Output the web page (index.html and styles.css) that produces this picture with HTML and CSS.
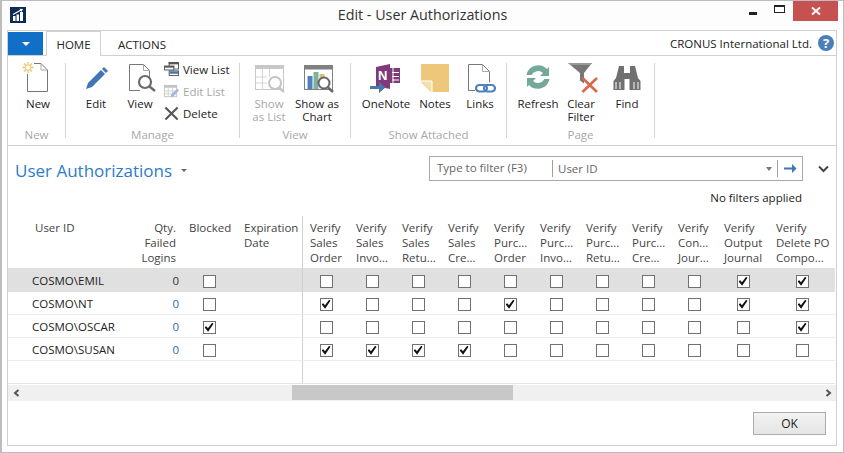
FILE: index.html
```html
<!DOCTYPE html>
<html lang="en">
<head>
<meta charset="utf-8">
<title>Edit - User Authorizations</title>
<link rel="stylesheet" href="styles.css">
</head>
<body>
<div class="window">
  <header class="titlebar">
    <svg class="logo" width="16" height="16" viewBox="0 0 16 16"><rect width="16" height="16" fill="#0e2a58"/><path d="M3 9h2.500v5H3zM6.500 7.500H9V14H6.500zM10 5h3v9h-3z" fill="#fff"/><path d="M3 7.500 11 3" stroke="#fff" stroke-width="1.200" fill="none"/><path d="M9.500 1.800 13 2l-1.500 3z" fill="#fff"/></svg>
    <div class="title">Edit - User Authorizations</div>
    <div class="winctl">
      <span class="wbtn"><span class="min"></span></span>
      <span class="wbtn"><span class="max"></span></span>
      <span class="close"><svg width="10" height="10" viewBox="0 0 10 10"><path d="M1 1.500 9 8.500M9 1.500 1 8.500" stroke="#fff" stroke-width="2"/></svg></span>
    </div>
  </header>
  <div class="frame">
    <div class="tabs">
      <button class="menu"><span class="menu-caret"></span></button>
      <span class="tab active">HOME</span>
      <span class="tab">ACTIONS</span>
      <span class="company">CRONUS International Ltd.</span>
      <span class="help">?</span>
    </div>
    <div class="ribbon">
      <section class="group g-new">
        <div class="items">
          <div class="btn w44">
            <svg viewBox="0 0 32 32"><path d="M12 1.500h7l6.500 6.500v21.500h-20V12" fill="#fff" stroke="#777"/><path d="M19 1.500V8h6.500" fill="none" stroke="#aaa"/><g stroke="#f2c46c" stroke-width="1.300"><path d="M.5 5.500h11M6 0v11M2 1.500l8 8M10 1.500l-8 8"/></g><circle cx="6" cy="5.500" r="2.700" fill="#fff" stroke="#f2c46c"/></svg>
            <span>New</span>
          </div>
        </div>
        <div class="glabel">New</div>
      </section>
      <i class="sep"></i>
      <section class="group g-manage">
        <div class="items">
          <div class="btn w44">
            <svg viewBox="0 0 32 32"><path d="M6 27 8 21 21 8 25 12 12 25z" fill="#3f76b5"/><path d="M22 7 24 5 28 9 26 11z" fill="#3f76b5"/></svg>
            <span>Edit</span>
          </div>
          <div class="btn w44">
            <svg viewBox="0 0 32 32"><path d="M5.500 2.500h14l6 6v8M16 28.500H5.500v-26" fill="#fff" stroke="#777"/><path d="M19.500 2.500v6h6" fill="none" stroke="#aaa"/><circle cx="21" cy="20" r="6" fill="#fff" stroke="#6b6b6b" stroke-width="2.200"/><path d="M25.500 24.500 31 29" stroke="#6b6b6b" stroke-width="2.400"/></svg>
            <span>View</span>
          </div>
          <div class="small-col">
            <div class="sbtn">
              <svg viewBox="0 0 16 16"><rect x="5.500" y=".5" width="10" height="7" fill="#fff" stroke="#555"/><rect x="5" y="0" width="11" height="2.500" fill="#555"/><rect x=".5" y="4.500" width="10" height="4" fill="#fff" stroke="#555"/><rect x="0" y="4" width="11" height="2" fill="#555"/><rect x="5.500" y="9.500" width="10" height="5" fill="#fff" stroke="#555"/><rect x="6" y="10" width="9" height="2.500" fill="#3f76b5"/></svg>
              <span>View List</span>
            </div>
            <div class="sbtn off">
              <svg viewBox="0 0 16 16"><rect x=".5" y="1.500" width="13" height="12" fill="#fff" stroke="#c4c4c4"/><rect x="0" y="1" width="14" height="3" fill="#c4c4c4"/><path d="M0 7.500h14M0 10.500h14M4.500 4v10M9 4v10" stroke="#d0d0d0"/><path d="M7 14l1-3 6-6 2 2-6 6z" fill="#9db9d9"/></svg>
              <span>Edit List</span>
            </div>
            <div class="sbtn">
              <svg viewBox="0 0 16 16"><path d="M1.500 1.500 14.500 14.500M14.500 1.500 1.500 14.500" stroke="#555" stroke-width="2.200"/></svg>
              <span>Delete</span>
            </div>
          </div>
        </div>
        <div class="glabel">Manage</div>
      </section>
      <i class="sep"></i>
      <section class="group g-view">
        <div class="items">
          <div class="btn w48 off">
            <svg viewBox="0 0 32 32"><rect x="2.500" y="3.500" width="28" height="24" fill="#fff" stroke="#c8c8c8"/><rect x="2" y="3" width="29" height="4" fill="#c8c8c8"/><path d="M9.500 7v21M16.500 7v8M2 15h12M2 21h12" stroke="#d4d4d4"/><circle cx="22" cy="21" r="6" fill="#fff" stroke="#c4c4c4" stroke-width="2"/><path d="M26 25.500 31 30" stroke="#c4c4c4" stroke-width="2.400"/></svg>
            <span>Show<br>as List</span>
          </div>
          <div class="btn w48">
            <svg viewBox="0 0 32 32"><rect x="3.500" y="3.500" width="28" height="24" fill="#fff" stroke="#808080"/><rect x="3" y="3" width="29" height="4.500" fill="#808080"/><rect x="6.500" y="14" width="5" height="13" fill="#4f81bd"/><rect x="12.500" y="10" width="5" height="17" fill="#7fb0a0"/><rect x="18.500" y="12" width="5" height="6" fill="#d6c27c"/><circle cx="23" cy="21" r="5.500" fill="#fff" stroke="#666" stroke-width="2"/><path d="M27 25.500 32 30" stroke="#666" stroke-width="2.400"/></svg>
            <span>Show as<br>Chart</span>
          </div>
        </div>
        <div class="glabel">View</div>
      </section>
      <i class="sep"></i>
      <section class="group g-attach">
        <div class="items">
          <div class="btn w54">
            <svg viewBox="0 0 32 32"><path d="M6 5 20 2V27L6 24z" fill="#80397b"/><rect x="20" y="6" width="10" height="15" fill="#80397b"/><path d="M23 6v15M22 10.500h7M22 14.500h7M22 18h7" stroke="#fff"/><text x="8" y="18" class="on-n">N</text><path d="M0 24h9V20l6.500 5.500L9 31V27H0z" fill="#4677ad"/></svg>
            <span>OneNote</span>
          </div>
          <div class="btn w44">
            <svg viewBox="0 0 32 32"><path d="M2 2h28v28H12L2 20z" fill="#efc77a"/><path d="M2 19h11v11" fill="#f6dfae" stroke="#fff"/></svg>
            <span>Notes</span>
          </div>
          <div class="btn w46">
            <svg viewBox="0 0 32 32"><path d="M4.500 2.500h14l7 7v11M11 28.500H4.500v-26" fill="#fff" stroke="#777"/><path d="M18.500 2.500v7h7" fill="none" stroke="#aaa"/><rect x="12" y="23" width="11" height="6.500" rx="3.200" fill="none" stroke="#4f81bd" stroke-width="2.200"/><rect x="20" y="23" width="11" height="6.500" rx="3.200" fill="none" stroke="#4f81bd" stroke-width="2.200"/></svg>
            <span>Links</span>
          </div>
        </div>
        <div class="glabel">Show Attached</div>
      </section>
      <i class="sep"></i>
      <section class="group g-page">
        <div class="items">
          <div class="btn w46">
            <svg viewBox="0 0 32 32"><path d="M4.500 13A12 12 0 0 1 25 7l2-2v9h-9l3-3A7.500 7.500 0 0 0 9.500 13z" fill="#74a99a"/><path d="M27.500 17A12 12 0 0 1 7 23l-2 2v-9h9l-3 3a7.500 7.500 0 0 0 11.500-2z" fill="#74a99a"/></svg>
            <span>Refresh</span>
          </div>
          <div class="btn w40">
            <svg viewBox="0 0 32 32"><path d="M3 1h24L19 11v10.500l-4 -3V11z" fill="#777"/><path d="M3 1h24l-2 2H6z" fill="#999"/><path d="M17.500 16 32 30M32 16 17.500 30" stroke="#d9694a" stroke-width="2.600"/></svg>
            <span>Clear<br>Filter</span>
          </div>
          <div class="btn w52">
            <svg viewBox="0 0 32 32"><path d="M8 4h5v7h6V4h5l3 12 2.500 3v9h-11V17h-5v11H2.500v-9L5 16z" fill="#707070"/><path d="M5 20v7M9 20v7M23 20v7M27 20v7" stroke="#fff"/></svg>
            <span>Find</span>
          </div>
        </div>
        <div class="glabel">Page</div>
      </section>
      <i class="sep"></i>
    </div>
    <div class="content">
      <div class="head">
        <h1>User Authorizations</h1>
        <span class="title-caret"></span>
        <div class="filter-area">
          <div class="filter-row">
            <div class="filter">
              <span class="f-type">Type to filter (F3)</span>
              <span class="f-field">User ID</span>
              <span class="f-caret"></span>
              <span class="f-go"><svg width="13" height="11" viewBox="0 0 13 11"><path d="M0 4.500h8V1l4.500 4.500L8 10V6.500H0z" fill="#3f76b5"/></svg></span>
            </div>
            <svg class="chev" width="11" height="8" viewBox="0 0 11 8"><path d="M1 1.500 5.500 6 10 1.500" fill="none" stroke="#444" stroke-width="2"/></svg>
          </div>
          <div class="nofilter">No filters applied</div>
        </div>
      </div>
      <table class="grid">
        <colgroup>
          <col class="c-user"><col class="c-qty"><col class="c-blk"><col class="c-exp">
          <col class="c-v"><col class="c-v"><col class="c-v"><col class="c-v"><col class="c-v"><col class="c-v"><col class="c-v"><col class="c-v"><col class="c-v">
          <col class="c-out"><col class="c-del">
        </colgroup>
        <thead>
          <tr>
            <th class="h-user">User ID</th>
            <th class="h-qty">Qty.<br>Failed<br>Logins</th>
            <th>Blocked</th>
            <th class="v-end h-exp">Expiration<br>Date</th>
            <th>Verify<br>Sales<br>Order</th>
            <th>Verify<br>Sales<br>Invo...</th>
            <th>Verify<br>Sales<br>Retu...</th>
            <th>Verify<br>Sales<br>Cre...</th>
            <th>Verify<br>Purc...<br>Order</th>
            <th>Verify<br>Purc...<br>Invo...</th>
            <th>Verify<br>Purc...<br>Retu...</th>
            <th>Verify<br>Purc...<br>Cre...</th>
            <th>Verify<br>Con...<br>Jour...</th>
            <th>Verify<br>Output<br>Journal</th>
            <th>Verify<br>Delete PO<br>Compo...</th>
          </tr>
        </thead>
        <tbody>
          <tr class="sel">
            <td class="user">COSMO\EMIL</td><td class="qty">0</td><td class="ck"><span class="cb"></span></td><td class="v-end"></td>
            <td class="ck"><span class="cb"></span></td><td class="ck"><span class="cb"></span></td><td class="ck"><span class="cb"></span></td><td class="ck"><span class="cb"></span></td><td class="ck"><span class="cb"></span></td><td class="ck"><span class="cb"></span></td><td class="ck"><span class="cb"></span></td><td class="ck"><span class="cb"></span></td><td class="ck"><span class="cb"></span></td>
            <td class="ck"><span class="cb on"></span></td><td class="ck"><span class="cb on"></span></td>
          </tr>
          <tr>
            <td class="user">COSMO\NT</td><td class="qty">0</td><td class="ck"><span class="cb"></span></td><td class="v-end"></td>
            <td class="ck"><span class="cb on"></span></td><td class="ck"><span class="cb"></span></td><td class="ck"><span class="cb"></span></td><td class="ck"><span class="cb"></span></td><td class="ck"><span class="cb on"></span></td><td class="ck"><span class="cb"></span></td><td class="ck"><span class="cb"></span></td><td class="ck"><span class="cb"></span></td><td class="ck"><span class="cb"></span></td>
            <td class="ck"><span class="cb on"></span></td><td class="ck"><span class="cb on"></span></td>
          </tr>
          <tr>
            <td class="user">COSMO\OSCAR</td><td class="qty">0</td><td class="ck"><span class="cb on"></span></td><td class="v-end"></td>
            <td class="ck"><span class="cb"></span></td><td class="ck"><span class="cb"></span></td><td class="ck"><span class="cb"></span></td><td class="ck"><span class="cb"></span></td><td class="ck"><span class="cb"></span></td><td class="ck"><span class="cb"></span></td><td class="ck"><span class="cb"></span></td><td class="ck"><span class="cb"></span></td><td class="ck"><span class="cb"></span></td>
            <td class="ck"><span class="cb"></span></td><td class="ck"><span class="cb on"></span></td>
          </tr>
          <tr>
            <td class="user">COSMO\SUSAN</td><td class="qty">0</td><td class="ck"><span class="cb"></span></td><td class="v-end"></td>
            <td class="ck"><span class="cb on"></span></td><td class="ck"><span class="cb on"></span></td><td class="ck"><span class="cb on"></span></td><td class="ck"><span class="cb on"></span></td><td class="ck"><span class="cb"></span></td><td class="ck"><span class="cb"></span></td><td class="ck"><span class="cb"></span></td><td class="ck"><span class="cb"></span></td><td class="ck"><span class="cb"></span></td>
            <td class="ck"><span class="cb"></span></td><td class="ck"><span class="cb"></span></td>
          </tr>
          <tr class="empty"><td></td><td></td><td></td><td class="v-end"></td><td colspan="11"></td></tr>
        </tbody>
      </table>
      <div class="scrollbar">
        <svg width="7" height="8" viewBox="0 0 7 8"><path d="M5.500 1 2 4l3.500 3" fill="none" stroke="#555" stroke-width="2"/></svg>
        <div class="track"><div class="thumb"></div></div>
        <svg width="7" height="8" viewBox="0 0 7 8"><path d="M1.500 1 5 4 1.500 7" fill="none" stroke="#555" stroke-width="2"/></svg>
      </div>
      <div class="footer"><button class="ok">OK</button></div>
    </div>
  </div>
</div>
</body>
</html>
```

FILE: styles.css
```css
* { box-sizing: border-box; }
html, body { margin: 0; padding: 0; }
body { width: 844px; height: 453px; overflow: hidden; background: #fff; font-family: "Open Sans", "Noto Sans", "Liberation Sans", sans-serif; font-size: 11.5px; color: #222; }
.window { width: 844px; height: 453px; border: 1px solid #bdbdbd; border-width: 1px 1px 1px 2px; display: flex; flex-direction: column; background: #fff; }

.titlebar { height: 29px; display: flex; align-items: flex-start; background: #fdfdfd; flex: none; }
.logo { margin: 6px 0 0 8px; flex: none; }
.title { flex: 1; text-align: center; font-size: 14.300px; line-height: 28px; color: #333; padding-left: 80px; }
.winctl { display: flex; align-items: flex-start; margin-right: 5px; }
.wbtn { width: 27px; height: 19px; display: flex; align-items: center; justify-content: center; }
.min { width: 8px; height: 3px; background: #222; margin-top: 6px; }
.max { width: 11px; height: 8px; border: 1px solid #222; border-top-width: 2px; margin-top: -3px; }
.close { width: 45px; height: 20px; background: #c75050; display: flex; align-items: center; justify-content: center; }

.frame { flex: 1; margin: 0 6px 6px 5px; border: 1px solid #d0d0d0; display: flex; flex-direction: column; min-height: 0; }
.tabs { height: 25px; flex: none; display: flex; align-items: flex-end; border-bottom: 1px solid #d0d0d0; }
.menu { width: 35px; height: 23px; margin: 0 3px 0 0; border: 0; padding: 0; background: #1070c8; display: flex; align-items: center; justify-content: center; }
.menu-caret { width: 0; height: 0; border: 4px solid transparent; border-top: 4px solid #fff; border-bottom: 0; }
.tab { height: 24px; padding: 0 11px; line-height: 25px; font-size: 11.500px; color: #222; margin-bottom: -1px; margin-right: 6px; }
.tab.active { width: 55px; padding: 0; text-align: center; background: #fff; border: 1px solid #d0d0d0; border-bottom: 0; height: 25px; }
.company { margin-left: auto; line-height: 26px; height: 24px; font-size: 11.500px; color: #222; }
.help { width: 16px; height: 16px; margin: 0 2px 4px 6px; border-radius: 50%; background: #4a7fb8; color: #fff; font-weight: 700; font-size: 13px; line-height: 16px; text-align: center; }

.ribbon { height: 90px; flex: none; display: flex; align-items: flex-start; border-bottom: 1px solid #d0d0d0; padding-top: 7px; }
.sep { width: 1px; height: 75px; background: #d4d4d4; flex: none; }
.group { height: 79px; display: flex; flex-direction: column; flex: none; }
.g-new { width: 57px; padding-left: 8px; }
.g-manage { width: 173px; padding-left: 8px; }
.g-view { width: 110px; padding-left: 5px; }
.g-attach { width: 155px; padding-left: 8px; }
.g-page { width: 147px; padding-left: 8px; }
.items { display: flex; flex: 1; align-items: flex-start; }
.glabel { height: 15px; line-height: 15px; text-align: center; color: #a8a8a8; margin-left: -8px; }
.g-view .glabel { margin-left: -5px; }
.btn { text-align: center; line-height: 13px; flex: none; color: #222; }
.btn svg { width: 32px; height: 32px; display: block; margin: -1px auto 3px; overflow: visible; }
.btn span { display: block; }
.btn.off, .sbtn.off { color: #a8a8a8; }
.w40 { width: 40px; } .w44 { width: 44px; } .w46 { width: 46px; } .w48 { width: 48px; } .w52 { width: 52px; } .w54 { width: 54px; }
.on-n { font-family: "Liberation Sans", sans-serif; font-size: 13px; font-weight: 700; fill: #fff; }
.small-col { margin: -5px 0 0 2px; display: flex; flex-direction: column; }
.sbtn { height: 22px; display: flex; align-items: center; gap: 4px; color: #222; }
.sbtn svg { width: 15px; height: 15px; flex: none; }

.content { flex: 1; display: flex; flex-direction: column; min-height: 0; }
.head { height: 70px; flex: none; display: flex; align-items: flex-start; }
h1 { margin: 13px 0 0 7px; font-weight: 400; font-size: 17px; line-height: 24px; color: #2c7cc8; }
.title-caret { width: 0; height: 0; margin: 23px 0 0 9px; border: 3px solid transparent; border-top: 3px solid #666; border-bottom: 0; }
.filter-area { margin-left: auto; margin-right: 4px; width: 403px; padding-top: 10px; }
.filter-row { display: flex; align-items: center; gap: 16px; }
.filter { width: 374px; height: 25px; border: 1px solid #a8a8a8; display: flex; align-items: center; flex: none; color: #666; }
.f-type { width: 123px; padding-left: 7px; line-height: 15px; height: 17px; border-right: 1px solid #a0a0a0; flex: none; }
.f-field { flex: 1; padding-left: 5px; }
.f-caret { width: 0; height: 0; border: 3.500px solid transparent; border-top: 4px solid #777; border-bottom: 0; margin-right: 5px; }
.f-go { width: 25px; height: 17px; border-left: 1px solid #a0a0a0; display: flex; align-items: center; justify-content: center; }
.chev { flex: none; margin-left: -1px; }
.nofilter { width: 373px; text-align: right; line-height: 15px; margin-top: 9px; color: #222; }

.grid { border-collapse: separate; border-spacing: 0; table-layout: fixed; width: 827px; flex: none; }
.c-user { width: 112px; } .c-qty { width: 62px; } .c-blk { width: 54px; } .c-exp { width: 67px; }
.c-v { width: 46px; } .c-out { width: 52px; } .c-del { width: 66px; }
th { height: 52px; padding: 4px 0 0 7px; font-weight: 400; line-height: 15px; text-align: left; vertical-align: top; color: #444; white-space: nowrap; overflow: hidden; }
.h-user { padding-left: 27px; }
.h-qty { text-align: right; padding: 4px 6px 0 0; }
.h-exp { padding-left: 8px; }
.v-end { border-right: 1px solid #d0d0d0; }
td { height: 23px; padding: 0; border-bottom: 1px solid #ececec; white-space: nowrap; }
.user { padding-left: 24px; color: #222; }
.qty { text-align: right; padding-right: 3px; color: #2a6ca8; }
.sel td { background: #e0e0e0; border-bottom: 0; height: 24px; }
.sel .qty { color: #333; }
.ck { text-align: center; }
.cb { display: inline-block; position: relative; width: 13px; height: 13px; border: 1px solid #707070; background: #fff; vertical-align: middle; }
.cb.on::after { content: ""; position: absolute; inset: 1px; background: #111; clip-path: polygon(0 50%, 20% 40%, 38% 62%, 85% 0, 100% 12%, 40% 100%); }
.empty td { height: 23px; border-bottom: 1px solid #e4e4e4; }

.scrollbar { height: 16px; margin-top: 1px; flex: none; background: #f0f0f0; display: flex; align-items: center; justify-content: space-between; padding: 0 4px 0 5px; }
.track { flex: 1; height: 15px; align-self: flex-start; display: flex; padding-left: 272px; }
.thumb { width: 221px; background: #c8c8c8; }
.footer { flex: 1; display: flex; justify-content: flex-end; align-items: flex-start; padding: 11px 10px 0 0; }
.ok { width: 73px; height: 23px; border: 1px solid #acacac; background: linear-gradient(#f2f2f2, #e5e5e5); font: inherit; font-size: 12px; color: #222; padding: 0; }
```
